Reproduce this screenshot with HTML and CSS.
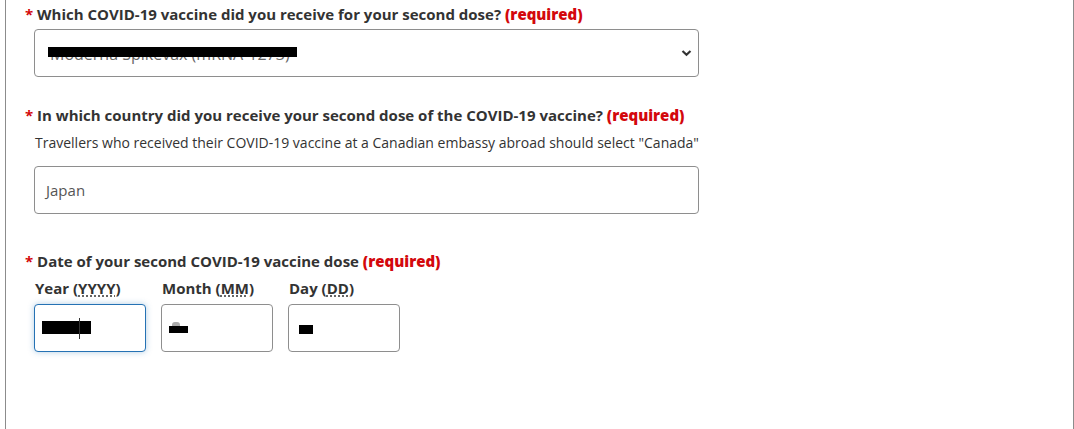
FILE: index.html
```html
<!DOCTYPE html>
<html lang="en">
<head>
    <meta charset="UTF-8">
    <title>Second dose</title>
    <link rel="stylesheet" href="styles.css">
</head>
<body>
<div class="panel">
    <div class="group group-vaccine">
        <label class="q"><span class="star">*</span> Which COVID-19 vaccine did you receive for your second dose? <strong class="req">(required)</strong></label>
        <div class="field select">
            <span class="val val-select">Moderna Spikevax (mRNA-1273)</span>
            <span class="redact r-select"></span>
            <svg class="chev" width="11" height="8" viewBox="0 0 11 8"><path d="M1.5 2 L5.5 5.8 L9.5 2" fill="none" stroke="#333" stroke-width="2.2"/></svg>
        </div>
    </div>

    <div class="group group-country">
        <label class="q"><span class="star">*</span> In which country did you receive your second dose of the COVID-19 vaccine? <strong class="req">(required)</strong></label>
        <p class="hint">Travellers who received their COVID-19 vaccine at a Canadian embassy abroad should select "Canada"</p>
        <div class="field text">
            <span class="val">Japan</span>
        </div>
    </div>

    <div class="group group-date">
        <label class="q"><span class="star">*</span> Date of your second COVID-19 vaccine dose <strong class="req">(required)</strong></label>
        <div class="date-row">
            <div class="date-col">
                <span class="sub">Year (<abbr title="Year">YYYY</abbr>)</span>
                <div class="field small focus">
                    <span class="redact r-year"></span>
                    <span class="caret"></span>
                </div>
            </div>
            <div class="date-col">
                <span class="sub">Month (<abbr title="Month">MM</abbr>)</span>
                <div class="field small">
                    <span class="ghost g-month"></span>
                    <span class="redact r-month"></span>
                </div>
            </div>
            <div class="date-col">
                <span class="sub">Day (<abbr title="Day">DD</abbr>)</span>
                <div class="field small">
                    <span class="redact r-day"></span>
                </div>
            </div>
        </div>
    </div>
</div>
</body>
</html>
```

FILE: styles.css
```css
* {
    margin: 0;
    padding: 0;
    box-sizing: border-box;
}

html, body {
    height: 100%;
}

body {
    font-family: "Open Sans", "Noto Sans", sans-serif;
    color: #333;
    background: #fff;
    overflow: hidden;
}

.panel {
    margin-left: 5px;
    width: 1069px;
    height: 100%;
    border-left: 1px solid #8c8c8c;
    border-right: 1px solid #8c8c8c;
    padding: 3px 0 0 19px;
}

.q {
    display: block;
    font-size: 15px;
    font-weight: 700;
    line-height: 22px;
}

.star {
    color: #d3080c;
}

.req {
    color: #d3080c;
}

.hint {
    font-size: 14px;
    line-height: 20px;
    margin: 7px 0 0 10px;
}

.field {
    position: relative;
    margin-left: 9px;
    border: 1px solid #8e8e8e;
    border-radius: 4px;
    background: #fff;
}

.select, .text {
    width: 665px;
    height: 48px;
}

.group-vaccine .select {
    margin-top: 4px;
}

.group-country {
    margin-top: 27px;
}

.group-country .text {
    margin-top: 13px;
}

.val {
    position: absolute;
    left: 11px;
    top: 12px;
    font-size: 15px;
    line-height: 22px;
    color: #555;
}

.val-select {
    font-size: 16px;
    top: 13px;
    left: 15px;
    color: #666;
}

.redact {
    position: absolute;
    background: #000;
}

.r-select {
    left: 13px;
    top: 17px;
    width: 249px;
    height: 10px;
}

.chev {
    position: absolute;
    right: 6px;
    top: 19px;
}

.group-date {
    margin-top: 36px;
}

.date-row {
    display: flex;
    gap: 15px;
    margin: 5px 0 0 9px;
}

.date-col {
    display: flex;
    flex-direction: column;
}

.sub {
    font-size: 15px;
    font-weight: 700;
    line-height: 22px;
    padding-left: 1px;
}

abbr {
    text-decoration: underline dotted;
    text-underline-offset: 2px;
}

.small {
    margin: 5px 0 0 0;
    width: 112px;
    height: 48px;
}

.focus {
    border-color: #2572b4;
    box-shadow: 0 0 6px rgba(37, 114, 180, 0.35);
}

.r-year {
    left: 7px;
    top: 16px;
    width: 49px;
    height: 13px;
}

.caret {
    position: absolute;
    left: 44px;
    top: 13px;
    width: 1px;
    height: 21px;
    background: #333;
}

.ghost {
    position: absolute;
    background: #aaa;
}

.g-month {
    left: 10px;
    top: 17px;
    width: 8px;
    height: 5px;
    border-radius: 3px 3px 0 0;
}

.r-month {
    left: 7px;
    top: 21px;
    width: 19px;
    height: 7px;
}

.r-day {
    left: 10px;
    top: 20px;
    width: 14px;
    height: 9px;
}
```
